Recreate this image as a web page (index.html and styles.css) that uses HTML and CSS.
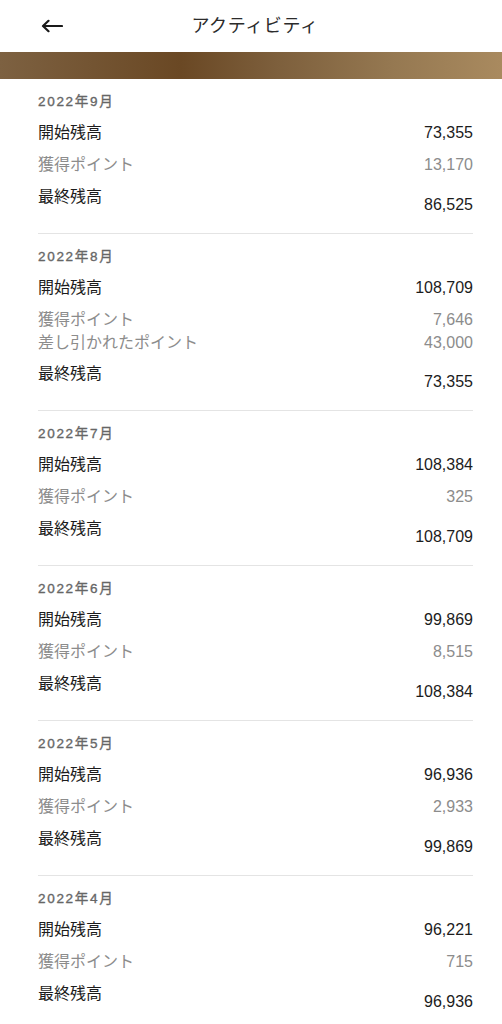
FILE: index.html
```html
<!DOCTYPE html>
<html lang="ja">
<head>
<meta charset="utf-8">
<title>アクティビティ</title>
<link rel="stylesheet" href="styles.css">
</head>
<body>
<header class="topbar">
  <button class="back" aria-label="戻る">
    <svg width="22" height="14" viewBox="0 0 22 14" fill="none" stroke="#1a1a1a" stroke-width="2.2" stroke-linecap="round" stroke-linejoin="round"><path d="M21 7H2.5M7.5 1.8L2 7l5.5 5.2"/></svg>
  </button>
  <h1 class="title">アクティビティ</h1>
  <span class="spacer"></span>
</header>
<div class="band"></div>
<main class="list">
  <section class="month">
    <h2 class="month-label">2022年9月</h2>
    <div class="row"><span>開始残高</span><span>73,355</span></div>
    <div class="points">
      <div class="row sub"><span>獲得ポイント</span><span>13,170</span></div>
    </div>
    <div class="row final"><span>最終残高</span><span class="val">86,525</span></div>
  </section>
  <section class="month">
    <h2 class="month-label">2022年8月</h2>
    <div class="row"><span>開始残高</span><span>108,709</span></div>
    <div class="points">
      <div class="row sub"><span>獲得ポイント</span><span>7,646</span></div>
      <div class="row sub tight"><span>差し引かれたポイント</span><span>43,000</span></div>
    </div>
    <div class="row final"><span>最終残高</span><span class="val">73,355</span></div>
  </section>
  <section class="month">
    <h2 class="month-label">2022年7月</h2>
    <div class="row"><span>開始残高</span><span>108,384</span></div>
    <div class="points">
      <div class="row sub"><span>獲得ポイント</span><span>325</span></div>
    </div>
    <div class="row final"><span>最終残高</span><span class="val">108,709</span></div>
  </section>
  <section class="month">
    <h2 class="month-label">2022年6月</h2>
    <div class="row"><span>開始残高</span><span>99,869</span></div>
    <div class="points">
      <div class="row sub"><span>獲得ポイント</span><span>8,515</span></div>
    </div>
    <div class="row final"><span>最終残高</span><span class="val">108,384</span></div>
  </section>
  <section class="month">
    <h2 class="month-label">2022年5月</h2>
    <div class="row"><span>開始残高</span><span>96,936</span></div>
    <div class="points">
      <div class="row sub"><span>獲得ポイント</span><span>2,933</span></div>
    </div>
    <div class="row final"><span>最終残高</span><span class="val">99,869</span></div>
  </section>
  <section class="month">
    <h2 class="month-label">2022年4月</h2>
    <div class="row"><span>開始残高</span><span>96,221</span></div>
    <div class="points">
      <div class="row sub"><span>獲得ポイント</span><span>715</span></div>
    </div>
    <div class="row final"><span>最終残高</span><span class="val">96,936</span></div>
  </section>
</main>
</body>
</html>
```
FILE: styles.css
```css
* { box-sizing: border-box; }
html, body { margin: 0; padding: 0; background: #fff; }
body {
  font-family: "Liberation Sans", "Noto Sans CJK JP", sans-serif;
  color: #1c1c1c;
  overflow: hidden;
}
.topbar {
  height: 52px;
  display: grid;
  grid-template-columns: 80px 1fr 80px;
  align-items: center;
}
.back {
  border: 0;
  background: none;
  padding: 0 0 0 41px;
  margin: 0;
  height: 52px;
  display: flex;
  align-items: center;
  justify-content: flex-start;
}
.title {
  margin: 0;
  padding-left: 8px;
  text-align: center;
  font-size: 18px;
  font-weight: 400;
  letter-spacing: 0.6px;
  color: #2b2b2b;
  line-height: 24px;
}
.band {
  height: 27px;
  background: linear-gradient(90deg, #7d6141 0%, #6a4824 36%, #7d5f3c 55%, #957851 78%, #a98a5f 100%);
}
.list {
  padding: 0 29px 0 38px;
}
.month {
  padding: 13px 0 16px;
  border-bottom: 1px solid #e4e4e4;
}
.month-label {
  margin: 0 0 9px;
  font-size: 13.5px;
  line-height: 20px;
  font-weight: 400;
  letter-spacing: 1.7px;
  color: #666;
  -webkit-text-stroke: 0.35px #666;
}
.row {
  display: flex;
  justify-content: space-between;
  align-items: flex-start;
  font-size: 16px;
  line-height: 24px;
}
.points {
  margin: 8px 0;
}
.sub { color: #8c8c8c; }
.tight { line-height: 22px; }
.final .val { padding-top: 8px; }
```
